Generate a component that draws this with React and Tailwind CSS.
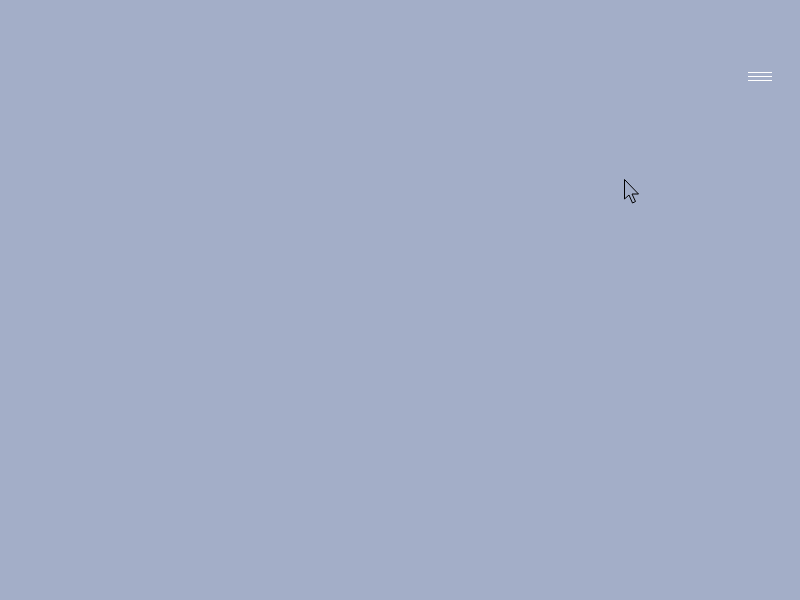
export default function App() {
  return (
    <div className="relative w-[800px] h-[600px] bg-[#a3aec8] overflow-hidden">
      <div className="flex justify-end pt-[72px] pr-[28px]">
        <button className="flex flex-col gap-[3px] w-6">
          <span className="block h-px w-6 bg-white" />
          <span className="block h-px w-6 bg-white" />
          <span className="block h-px w-6 bg-white" />
        </button>
      </div>
      <svg
        className="absolute left-[623px] top-[178px]"
        width="20"
        height="28"
        viewBox="0 0 20 28"
      >
        <path
          d="M1.5 1.5 L1.5 21 L6 17 L9.5 25 L12.5 23.5 L9 16 L15.5 16 Z"
          fill="#a3aec8"
          stroke="#000"
          strokeWidth="1"
          strokeLinejoin="miter"
        />
      </svg>
    </div>
  );
}
